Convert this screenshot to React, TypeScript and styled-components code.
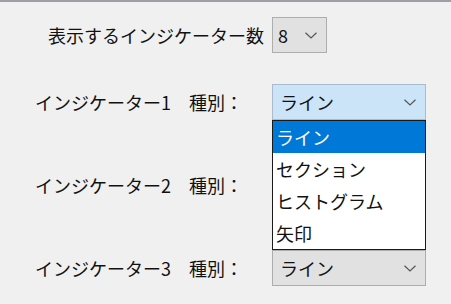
import React from "react";
import styled, { createGlobalStyle } from "styled-components";

const Global = createGlobalStyle`
  html, body { margin: 0; padding: 0; background: #f0f0f0; }
  body {
    font-family: "Noto Sans CJK JP", "Noto Sans", sans-serif;
    font-size: 18px;
    color: #000;
  }
`;

const Window = styled.div`
  width: 451px;
  height: 304px;
  box-sizing: border-box;
  border-top: 2px solid #9c9fa4;
  background: #f0f0f0;
  display: flex;
  flex-direction: column;
  overflow: hidden;
`;

const TopRow = styled.div`
  display: flex;
  align-items: center;
  gap: 8px;
  padding: 15px 0 0 48px;
  height: 36px;
`;

const Rows = styled.div`
  display: flex;
  flex-direction: column;
  gap: 47px;
  margin-top: 31px;
  padding-left: 35px;
`;

const Row = styled.div`
  display: grid;
  grid-template-columns: 237px 154px;
  align-items: center;
  height: 36px;
`;

const Label = styled.span`
  white-space: pre;
  line-height: 1;
  color: #111;
`;

const SelectWrap = styled.div`
  position: relative;
`;

const Select = styled.div<{ $active?: boolean; $width: number; $pad: number }>`
  box-sizing: border-box;
  width: ${(p) => p.$width}px;
  height: 36px;
  display: flex;
  align-items: center;
  justify-content: space-between;
  padding: 0 9px 0 ${(p) => p.$pad}px;
  background: ${(p) => (p.$active ? "#cce4f7" : "#e1e1e1")};
  border: 1px solid ${(p) => (p.$active ? "#a9bccd" : "#adadad")};
  line-height: 1;
  color: #111;
`;

const List = styled.div`
  position: absolute;
  top: 100%;
  left: 0;
  z-index: 2;
  box-sizing: border-box;
  width: 154px;
  height: 130px;
  background: #fff;
  border: 1px solid #1a1a1a;
  display: flex;
  flex-direction: column;
`;

const Item = styled.div<{ $selected?: boolean }>`
  height: 32px;
  display: flex;
  align-items: center;
  padding-left: 3px;
  line-height: 1;
  background: ${(p) => (p.$selected ? "#0078d7" : "transparent")};
  color: ${(p) => (p.$selected ? "#fff" : "#111")};
`;

const Chevron = () => (
  <svg width="12" height="7" viewBox="0 0 12 7" style={{ display: "block", marginLeft: "auto" }}>
    <polyline points="0.5,0.8 6,6 11.5,0.8" fill="none" stroke="#555" strokeWidth="1.2" />
  </svg>
);

const options = ["ライン", "セクション", "ヒストグラム", "矢印"];

export default function App() {
  return (
    <Window>
      <Global />
      <TopRow>
        <Label>表示するインジケーター数</Label>
        <Select $width={55} $pad={5}>
          <span>8</span>
          <Chevron />
        </Select>
      </TopRow>
      <Rows>
        <Row>
          <Label>インジケーター1　種別：</Label>
          <SelectWrap>
            <Select $active $width={154} $pad={7}>
              <span>ライン</span>
              <Chevron />
            </Select>
            <List>
              {options.map((o, i) => (
                <Item key={o} $selected={i === 0}>
                  {o}
                </Item>
              ))}
            </List>
          </SelectWrap>
        </Row>
        <Row>
          <Label>インジケーター2　種別：</Label>
          <SelectWrap>
            {/* covered by the open list above; its value is not visible */}
            <Select $width={154} $pad={7}>
              <Chevron />
            </Select>
          </SelectWrap>
        </Row>
        <Row>
          <Label>インジケーター3　種別：</Label>
          <SelectWrap>
            <Select $width={154} $pad={7}>
              <span>ライン</span>
              <Chevron />
            </Select>
          </SelectWrap>
        </Row>
      </Rows>
    </Window>
  );
}
